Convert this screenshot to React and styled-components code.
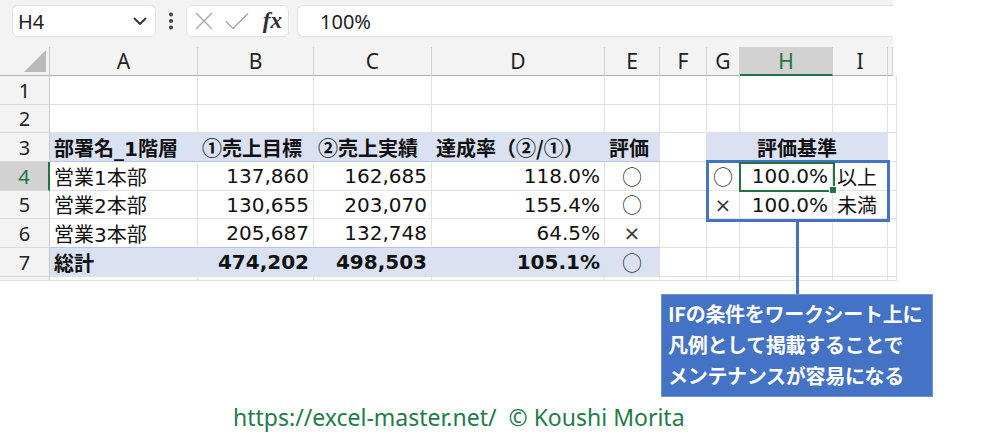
import React from "react";
import styled, {createGlobalStyle} from "styled-components";

const GlobalStyle = createGlobalStyle`
  body {
    margin: 0;
    background: #fff;
  }
`

const FONT = `"Noto Sans", "Noto Sans CJK JP", sans-serif`
const CELL_FONT = `"DejaVu Sans", "Noto Sans CJK JP", sans-serif`
const CJK_FONT = `"Noto Sans CJK JP", sans-serif`
const GREEN = '#217346'
const BLUE = '#4472C4'
const FILL = '#D9E1F2'
const TABLE_LINE = '#b4c6e7'
const GRID = '#e1e1e1'

const COLS = ['A', 'B', 'C', 'D', 'E', 'F', 'G', 'H', 'I', '']
const ACTIVE_COL = 'H'
const ACTIVE_ROW = 4

const Page = styled.div`
  position: relative;
  width: 1000px;
  height: 441px;
  overflow: hidden;
  display: flex;
  flex-direction: column;
  font-family: ${FONT};
  color: #111;
`

const Workbook = styled.div`
  width: 893px;
  background: #f3f3f3;
`

const FormulaBar = styled.div`
  height: 47px;
  box-sizing: border-box;
  padding: 5px 0 10px 12px;
  display: flex;
  align-items: stretch;
`

const NameBox = styled.div`
  width: 144px;
  box-sizing: border-box;
  background: #fff;
  border: 1px solid #e3e3e3;
  border-radius: 6px;
  display: flex;
  align-items: center;
  justify-content: space-between;
  padding: 0 8px 0 5px;
  font-size: 20px;
  color: #222;
`

const MoreDots = styled.div`
  width: 30px;
  display: flex;
  align-items: center;
  justify-content: center;
`

const FxBox = styled.div`
  width: 103px;
  box-sizing: border-box;
  background: #fff;
  border: 1px solid #e3e3e3;
  border-radius: 6px;
  display: flex;
  align-items: center;
  padding: 0 6px 0 8px;
  gap: 12px;
`

const FxLabel = styled.span`
  margin-left: auto;
  font-family: "Liberation Serif", "DejaVu Serif", serif;
  font-style: italic;
  font-weight: 700;
  font-size: 23px;
  color: #333;
`

const FormulaInput = styled.div`
  flex: 1;
  margin-left: 8px;
  background: #fff;
  border: 1px solid #e3e3e3;
  border-right: none;
  border-radius: 6px 0 0 6px;
  display: flex;
  align-items: center;
  padding-left: 22px;
  font-size: 20px;
  color: #222;
`

const Sheet = styled.div`
  display: grid;
  grid-template-columns: 50px 148px 116px 118px 173px 55px 47px 33px 93px 55px 5px;
  grid-template-rows: 29px 29px 28px 29px 29px 28px 29px 29px 4px;
  background: #fff;
  font-family: ${CELL_FONT};
  font-size: 20px;
`

const Corner = styled.div`
  background: #f3f3f3;
  border-right: 1px solid #c8c8c8;
  border-bottom: 1px solid #b0b0b0;
  box-sizing: border-box;
  display: flex;
  align-items: flex-end;
  justify-content: flex-end;
  padding: 0 3px 3px 0;
`

const ColHead = styled.div`
  box-sizing: border-box;
  background: ${p => p.$active ? '#d2d2d2' : '#f3f3f3'};
  color: ${p => p.$active ? GREEN : '#222'};
  border-right: 1px solid #d0d0d0;
  border-bottom: ${p => p.$active ? `2px solid ${GREEN}` : '1px solid #b0b0b0'};
  display: flex;
  align-items: center;
  justify-content: center;
  font-family: ${FONT};
  font-size: 21px;
`

const RowHead = styled.div`
  box-sizing: border-box;
  background: ${p => p.$active ? '#d2d2d2' : '#f3f3f3'};
  color: ${p => p.$active ? GREEN : '#222'};
  border-right: ${p => p.$active ? `2px solid ${GREEN}` : '1px solid #c8c8c8'};
  border-bottom: 1px solid #dcdcdc;
  display: flex;
  align-items: center;
  justify-content: center;
  font-family: ${FONT};
  font-size: 20px;
`

const Cell = styled.div`
  box-sizing: border-box;
  grid-column: span ${p => p.$span || 1};
  background: ${p => p.$fill || '#fff'};
  border-right: 1px solid ${p => p.$fill || GRID};
  border-bottom: 1px solid ${p => p.$line || GRID};
  font-family: ${p => p.$cjk ? CJK_FONT : 'inherit'};
  font-weight: ${p => p.$bold ? 700 : 400};
  display: flex;
  align-items: center;
  justify-content: ${p => p.$align === 'right' ? 'flex-end' : p.$align === 'center' ? 'center' : 'flex-start'};
  padding: 0 4px;
  white-space: nowrap;
  overflow: visible;
`

const Mark = styled.span`
  font-family: ${p => p.$latin ? CELL_FONT : CJK_FONT};
  font-weight: 400;
  color: #333;
  font-size: 20px;
`

const CriteriaFrame = styled.div`
  position: absolute;
  left: 706px;
  top: 160px;
  width: 184px;
  height: 62px;
  box-sizing: border-box;
  border: 3px solid ${BLUE};
  pointer-events: none;
`

const Selection = styled.div`
  position: absolute;
  left: 739px;
  top: 162px;
  width: 96px;
  height: 30px;
  box-sizing: border-box;
  border: 2px solid ${GREEN};
  &::after {
    content: "";
    position: absolute;
    right: -4px;
    bottom: -4px;
    width: 6px;
    height: 6px;
    background: ${GREEN};
    border: 1px solid #fff;
  }
`

const Connector = styled.div`
  position: absolute;
  left: 796px;
  top: 222px;
  width: 3px;
  height: 72px;
  background: ${BLUE};
`

const Callout = styled.div`
  position: absolute;
  left: 661px;
  top: 294px;
  width: 272px;
  height: 103px;
  box-sizing: border-box;
  background: ${BLUE};
  border: 1px solid #6f93d3;
  color: #fff;
  font-family: ${CJK_FONT};
  font-weight: 700;
  font-size: 20px;
  line-height: 31px;
  padding: 3px 0 0 6px;
  letter-spacing: -0.3px;
`

const Footer = styled.div`
  margin-top: auto;
  padding: 0 0 8px 233px;
  font-size: 23px;
  color: #237a4c;
`

const Circle = () => <Mark>○</Mark>
const Cross = () => <Mark $latin>×</Mark>

// one cell: value, alignment and the styling props it needs
const t = (v, align, more = {}) => ({v, align, ...more})

const head = {$fill: FILL, $bold: true, $line: TABLE_LINE}
const total = {$fill: FILL, $bold: true}

const SHEET_ROWS = [
    {n: 1, cells: []},
    {n: 2, cells: []},
    {
        n: 3, cells: [
            t('部署名_1階層', 'left', head),
            t('①売上目標', 'left', {...head, $cjk: true}),
            t('②売上実績', 'left', {...head, $cjk: true}),
            t('達成率（②/①）', 'left', {...head, $cjk: true}),
            t('評価', 'left', head),
            t(''),
            t('評価基準', 'center', {$fill: FILL, $bold: true, $span: 3}),
            t(''),
        ]
    },
    {
        n: 4, cells: [
            t('営業1本部'), t('137,860', 'right'), t('162,685', 'right'), t('118.0%', 'right'),
            t(<Circle/>, 'center'), t(''), t(<Circle/>, 'center'), t('100.0%', 'right'), t('以上'), t(''),
        ]
    },
    {
        n: 5, cells: [
            t('営業2本部'), t('130,655', 'right'), t('203,070', 'right'), t('155.4%', 'right'),
            t(<Circle/>, 'center'), t(''), t(<Cross/>, 'center'), t('100.0%', 'right'), t('未満'), t(''),
        ]
    },
    {
        n: 6, cells: [
            t('営業3本部', 'left', {$line: TABLE_LINE}), t('205,687', 'right', {$line: TABLE_LINE}),
            t('132,748', 'right', {$line: TABLE_LINE}), t('64.5%', 'right', {$line: TABLE_LINE}),
            t(<Cross/>, 'center', {$line: TABLE_LINE}), t(''), t(''), t(''), t(''), t(''),
        ]
    },
    {
        n: 7, cells: [
            t('総計', 'left', total), t('474,202', 'right', total), t('498,503', 'right', total),
            t('105.1%', 'right', total), t(<Circle/>, 'center', {$fill: FILL}),
            t(''), t(''), t(''), t(''), t(''),
        ]
    },
    {n: '', cells: []},
]

const CornerTriangle = () => (
    <svg width="22" height="22" viewBox="0 0 22 22">
        <polygon points="22,0 22,22 0,22" fill="#b9b9b9"/>
    </svg>
)

const Chevron = () => (
    <svg width="14" height="9" viewBox="0 0 14 9">
        <polyline points="1.5,1.5 7,7 12.5,1.5" fill="none" stroke="#333" strokeWidth="1.8"
                  strokeLinecap="round" strokeLinejoin="round"/>
    </svg>
)

const VerticalDots = () => (
    <svg width="6" height="18" viewBox="0 0 6 18">
        <circle cx="3" cy="2.5" r="2" fill="#444"/>
        <circle cx="3" cy="9" r="2" fill="#444"/>
        <circle cx="3" cy="15.5" r="2" fill="#444"/>
    </svg>
)

const CancelIcon = () => (
    <svg width="18" height="18" viewBox="0 0 18 18">
        <path d="M1 1 L17 17 M17 1 L1 17" stroke="#a8a8a8" strokeWidth="1.4" fill="none"/>
    </svg>
)

const EnterIcon = () => (
    <svg width="24" height="18" viewBox="0 0 24 18">
        <path d="M1 9.5 L8 16.5 L23 1.5" stroke="#a8a8a8" strokeWidth="1.4" fill="none"/>
    </svg>
)

const SheetRow = ({row}) => {
    const cells = row.cells.length ? row.cells : COLS.map(() => t(''))
    return (
        <>
            <RowHead $active={row.n === ACTIVE_ROW}>{row.n}</RowHead>
            {cells.map((c, i) => (
                <Cell key={i} $align={c.align} $fill={c.$fill} $bold={c.$bold}
                      $line={c.$line} $span={c.$span} $cjk={c.$cjk}>
                    {c.v}
                </Cell>
            ))}
        </>
    )
}

export default function App() {
    return (
        <Page>
            <GlobalStyle/>
            <Workbook>
                <FormulaBar>
                    <NameBox>
                        <span>H4</span>
                        <Chevron/>
                    </NameBox>
                    <MoreDots><VerticalDots/></MoreDots>
                    <FxBox>
                        <CancelIcon/>
                        <EnterIcon/>
                        <FxLabel>fx</FxLabel>
                    </FxBox>
                    <FormulaInput>100%</FormulaInput>
                </FormulaBar>
                <Sheet>
                    <Corner><CornerTriangle/></Corner>
                    {COLS.map((c, i) => <ColHead key={i} $active={c === ACTIVE_COL}>{c}</ColHead>)}
                    {SHEET_ROWS.map((row, i) => <SheetRow key={i} row={row}/>)}
                </Sheet>
            </Workbook>

            <CriteriaFrame/>
            <Selection/>
            <Connector/>
            <Callout>
                IFの条件をワークシート上に<br/>
                凡例として掲載することで<br/>
                メンテナンスが容易になる
            </Callout>

            <Footer>https://excel-master.net/&nbsp;&nbsp;© Koushi Morita</Footer>
        </Page>
    )
}
